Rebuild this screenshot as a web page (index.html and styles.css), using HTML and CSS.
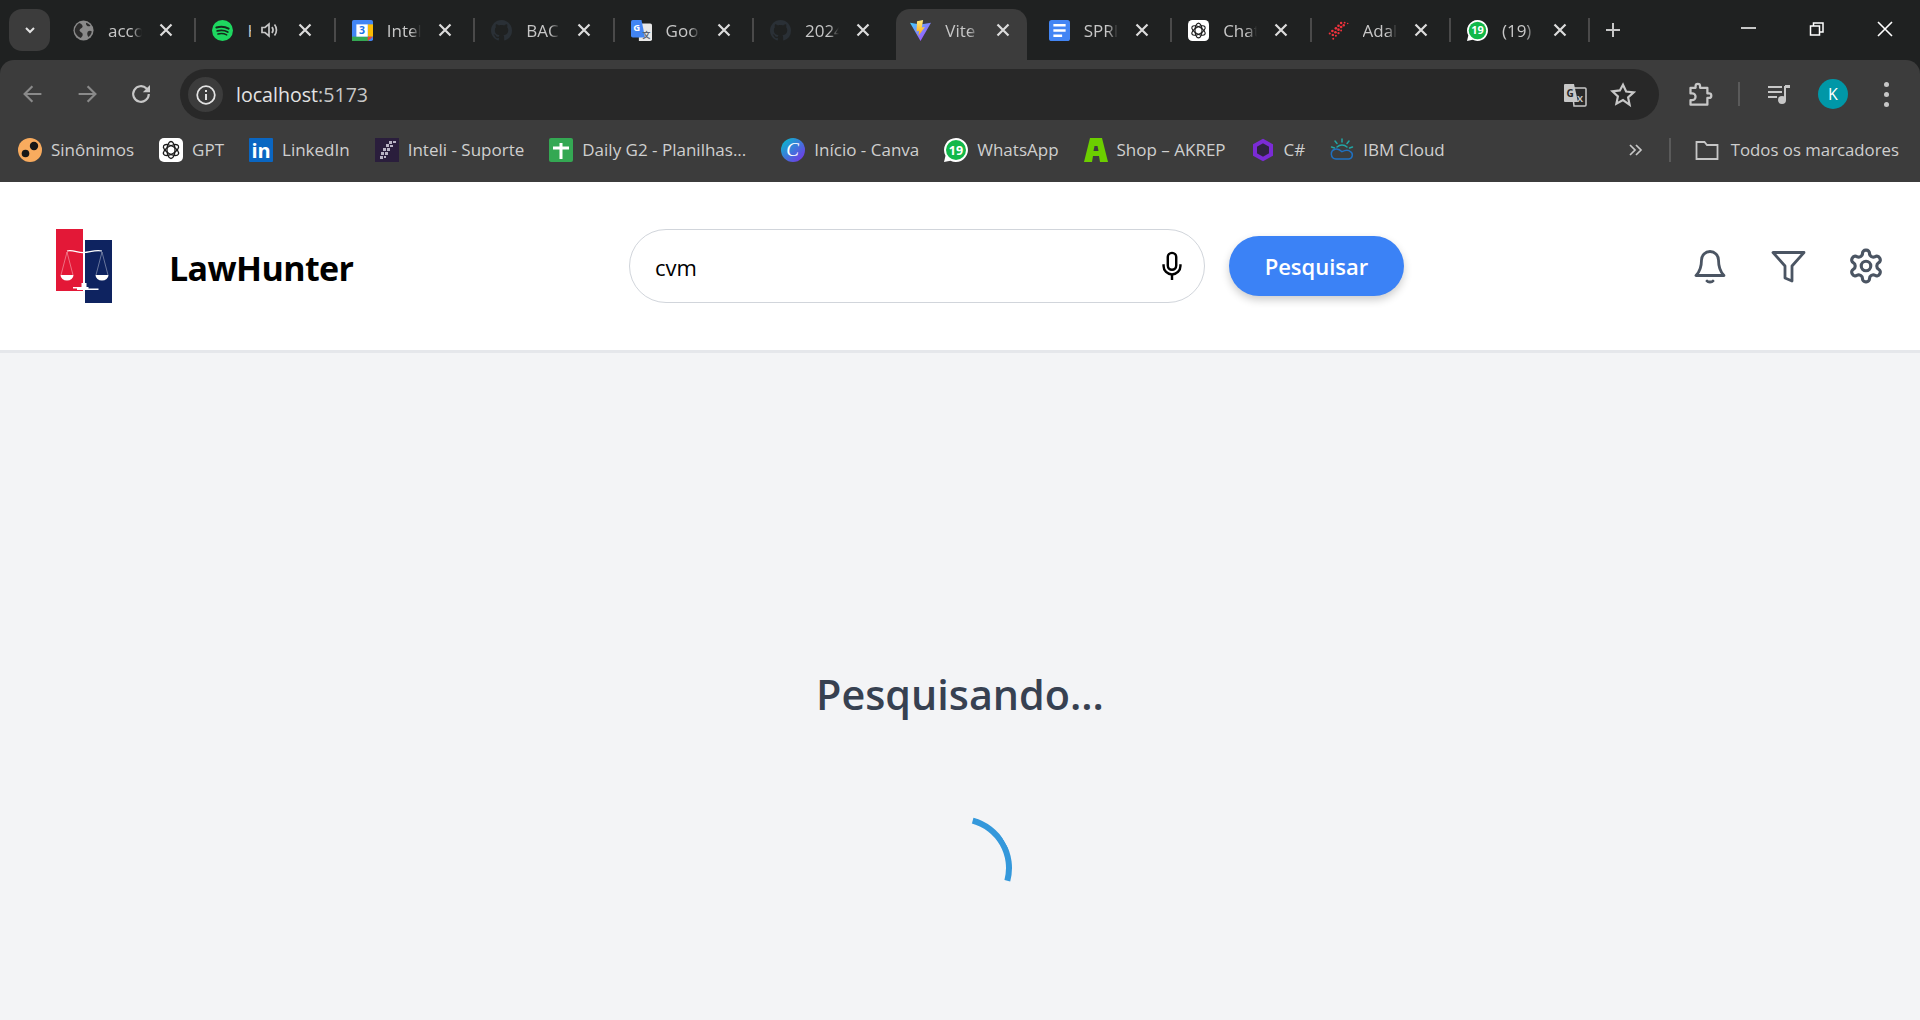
FILE: index.html
```html
<!DOCTYPE html>
<html lang="pt-BR">
<head>
  <meta charset="UTF-8">
  <meta name="viewport" content="width=device-width, initial-scale=1.0">
  <title>Vite + React</title>
  <link rel="stylesheet" href="styles.css">
</head>
<body>
  <svg class="sprites" aria-hidden="true">
    <defs>
      <linearGradient id="viteBg" x1="0" y1="0" x2="1" y2="1"><stop offset="0" stop-color="#41d1ff"/><stop offset="1" stop-color="#bd34fe"/></linearGradient>
      <linearGradient id="viteBolt" x1="0" y1="0" x2="0" y2="1"><stop offset="0" stop-color="#ffea83"/><stop offset="1" stop-color="#ffa800"/></linearGradient>
      <linearGradient id="canvaBg" x1="0" y1="0" x2="1" y2="1"><stop offset="0" stop-color="#00c4cc"/><stop offset="1" stop-color="#7d2ae8"/></linearGradient>
      <symbol id="i-x" viewBox="0 0 14 14"><path d="M1.500 1.500l11 11M12.500 1.500l-11 11" stroke="#dcdcdc" stroke-width="2.200"/></symbol>
      <symbol id="i-globe" viewBox="0 0 24 24"><circle cx="12" cy="12" r="11.500" fill="#8a8a8a"/><path d="M7 3.500c2 .5 4 2 4 4s-3 2-3.500 4 3 2.500 3.500 4.500-1 3-2 4.500c-3-1-6.500-4-7-8.500C2 9 4 5.500 7 3.500zM15 3c2 .5 4 2 5 3.500-1.500 1-3 1-4 0s-1.500-2.500-1-3.500zM17 13c1.500-.8 3-.8 4.500 0-.5 3-2 5-4 6.500-1-2-2-4.500-.5-6.500z" fill="#2c2c2c"/></symbol>
      <symbol id="i-spotify" viewBox="0 0 24 24"><circle cx="12" cy="12" r="12" fill="#1ed760"/><g fill="none" stroke="#14291c" stroke-linecap="round"><path d="M5 8.500c4.500-1.300 10-1 14 1.300" stroke-width="2.300"/><path d="M6 12.500c4-1 8.500-.7 12 1.200" stroke-width="2"/><path d="M6.800 16c3.500-.8 7-.5 10 1" stroke-width="1.700"/></g></symbol>
      <symbol id="i-calendar" viewBox="0 0 24 24"><rect width="24" height="24" rx="2" fill="#4285f4"/><rect x="18" y="5" width="6" height="14" fill="#fbbc04"/><rect y="19" width="19" height="5" fill="#34a853"/><path d="M18 19h6l-6 5z" fill="#ea4335"/><rect x="5" y="5" width="13" height="14" fill="#fff"/><text x="11.500" y="16.500" text-anchor="middle" class="svg-bold" font-size="12" fill="#1a73e8">3</text></symbol>
      <symbol id="i-github" viewBox="0 0 16 16"><path fill="#2a3036" d="M8 0C3.580 0 0 3.580 0 8c0 3.540 2.290 6.530 5.470 7.590.4.070.55-.17.55-.38 0-.19-.01-.82-.01-1.490-2.010.37-2.530-.49-2.690-.94-.09-.23-.48-.94-.82-1.130-.28-.15-.68-.52-.01-.53.63-.01 1.080.58 1.230.82.72 1.210 1.870.87 2.330.66.070-.52.280-.87.510-1.070-1.780-.2-3.640-.89-3.640-3.950 0-.87.310-1.590.820-2.150-.08-.2-.36-1.020.08-2.120 0 0 .67-.21 2.200.82.64-.18 1.320-.27 2-.27s1.360.09 2 .27c1.530-1.040 2.200-.82 2.200-.82.44 1.100.16 1.920.08 2.120.51.560.82 1.270.82 2.150 0 3.070-1.870 3.750-3.650 3.950.29.25.54.73.54 1.480 0 1.070-.01 1.930-.01 2.200 0 .21.150.46.550.38A8.010 8.010 0 0 0 16 8c0-4.420-3.580-8-8-8z"/></symbol>
      <symbol id="i-gtranslate" viewBox="0 0 24 24"><path d="M9 4h13a2 2 0 0 1 2 2v16a2 2 0 0 1-2 2H9z" fill="#e8e8e8"/><path d="M2 0h10l4 20H2a2 2 0 0 1-2-2V2a2 2 0 0 1 2-2z" fill="#4285f4"/><text x="6.500" y="13" text-anchor="middle" class="svg-bold" font-size="11" fill="#fff">G</text><text x="17.500" y="20" text-anchor="middle" class="svg-bold" font-size="9" fill="#5a6270">文</text></symbol>
      <symbol id="i-vite" viewBox="0 0 24 24"><path d="M0 3l12 2.200L24 3 12 24z" fill="url(#viteBg)"/><path d="M15 0L8 1.500 7.500 13l3-.6-.8 5.600L17 8l-3.500.6z" fill="url(#viteBolt)"/></symbol>
      <symbol id="i-docs" viewBox="0 0 24 24"><rect width="24" height="24" rx="3" fill="#4285f4"/><path d="M5 6h14M5 12h14M5 18h10" stroke="#fff" stroke-width="2.600"/></symbol>
      <symbol id="i-chatgpt" viewBox="0 0 24 24"><rect width="24" height="24" rx="5" fill="#fff"/><g fill="none" stroke="#1a1a1a" stroke-width="1.300"><ellipse cx="12" cy="12" rx="4" ry="8.500"/><ellipse cx="12" cy="12" rx="4" ry="8.500" transform="rotate(60 12 12)"/><ellipse cx="12" cy="12" rx="4" ry="8.500" transform="rotate(120 12 12)"/></g></symbol>
      <symbol id="i-ada" viewBox="0 0 24 24"><g fill="#f0323c"><circle cx="19" cy="3" r="1.100"/><circle cx="22.500" cy="4" r=".9"/><circle cx="15" cy="3.500" r="1.400"/><circle cx="18" cy="6" r="1.400"/><circle cx="12" cy="6.500" r="1.500"/><circle cx="15" cy="8" r="1.500"/><circle cx="9" cy="9.500" r="1.500"/><circle cx="12" cy="11" r="1.500"/><circle cx="15" cy="12" r="1.100"/><circle cx="5" cy="12.500" r="1.500"/><circle cx="8.500" cy="14" r="1.500"/><circle cx="12" cy="15" r="1.300"/><circle cx="2" cy="15.500" r="1.200"/><circle cx="5.500" cy="17" r="1.400"/><circle cx="9" cy="18" r="1.200"/><circle cx="6" cy="21.500" r="1.100"/></g></symbol>
      <symbol id="i-whatsapp" viewBox="0 0 24 24"><path d="M12 0a12 12 0 1 1-5.500 22.700L0 24l1.500-6.200A12 12 0 0 1 12 0z" fill="#fff"/><circle cx="12" cy="12" r="10" fill="#12b84a"/><text x="12" y="16.500" text-anchor="middle" class="svg-bold" font-size="12.500" fill="#fff">19</text></symbol>
      <symbol id="i-sinonimos" viewBox="0 0 24 24"><circle cx="12" cy="12" r="12" fill="#f8ab5e"/><circle cx="16" cy="8" r="4.200" fill="#171717"/><circle cx="7.500" cy="15.500" r="3.800" fill="#171717"/></symbol>
      <symbol id="i-linkedin" viewBox="0 0 24 24"><rect width="24" height="24" rx="1" fill="#0a66c2"/><text x="12" y="20" text-anchor="middle" class="svg-bold" font-size="20" fill="#fff">in</text></symbol>
      <symbol id="i-inteli" viewBox="0 0 24 24"><rect width="24" height="24" fill="#2a1e3c"/><g fill="#b9b4c4"><rect x="14" y="3" width="3" height="3"/><rect x="18" y="3" width="3" height="2"/><rect x="11" y="6" width="3" height="3"/><rect x="15" y="7" width="3" height="2"/><rect x="8" y="10" width="3" height="3"/><rect x="12" y="10" width="3" height="3"/><rect x="6" y="14" width="3" height="3"/><rect x="10" y="14" width="3" height="3"/><rect x="5" y="18" width="3" height="3"/><rect x="9" y="18" width="2" height="2"/></g></symbol>
      <symbol id="i-sheet" viewBox="0 0 24 24"><rect width="24" height="24" rx="2" fill="#34a853"/><path d="M12 5v16M4 10h16" stroke="#fff" stroke-width="3"/></symbol>
      <symbol id="i-canva" viewBox="0 0 24 24"><circle cx="12" cy="12" r="12" fill="url(#canvaBg)"/><text x="11.500" y="18" text-anchor="middle" class="svg-serif" font-size="19" fill="#fff">C</text></symbol>
      <symbol id="i-akrep" viewBox="0 0 24 24"><path d="M6 0h12l6 24h-8l-1-6H9l-1 6H0z" fill="#6cce00"/><path d="M10.500 8h3l1 5h-5z" fill="#3c3c3c"/></symbol>
      <symbol id="i-csharp" viewBox="0 0 24 24"><path d="M12 3l8 4.500v9L12 21l-8-4.500v-9z" fill="#2f2440" stroke="#7b2bd6" stroke-width="4"/></symbol>
      <symbol id="i-ibm" viewBox="0 0 24 24"><g fill="none" stroke-linecap="round" stroke-width="1.500"><path d="M12 1v3M5 3l2 2.500M19 3l-2 2.500M1.500 9l3 1M22.500 9l-3 1" stroke="#22a6a6"/><path d="M7 9a7 7 0 0 1 10 0" stroke="#22a6a6"/><path d="M6 21a5 5 0 0 1-1-9.800c3-1 5 .5 7 2.500 2-1 6-2.500 8.500 0a4 4 0 0 1-1.500 7.300z" stroke="#1f70c1"/></g></symbol>
    </defs>
  </svg>

  <header class="chrome">
    <div class="tabstrip">
      <button class="tab-search"><svg width="14" height="14" viewBox="0 0 14 14"><path d="M3 5l4 4 4-4" fill="none" stroke="#e3e3e3" stroke-width="2"/></svg></button>
      <div class="tabs">
        <div class="tab"><svg class="favicon"><use href="#i-globe"/></svg><span class="tab-title">accounts</span><svg class="tab-x"><use href="#i-x"/></svg></div>
        <div class="tab tab-audio"><svg class="favicon"><use href="#i-spotify"/></svg><span class="tab-title">Home</span>
          <svg class="tab-speaker" viewBox="0 0 20 20"><path d="M3 7.500h3L10 4v12l-4-3.500H3z" fill="none" stroke="#c7c7c7" stroke-width="1.700"/><path d="M13 7c1.300 1.800 1.300 4.200 0 6M15.500 4.500c2.600 3.200 2.600 7.800 0 11" fill="none" stroke="#c7c7c7" stroke-width="1.700"/></svg>
          <svg class="tab-x"><use href="#i-x"/></svg></div>
        <div class="tab"><svg class="favicon"><use href="#i-calendar"/></svg><span class="tab-title">Inteli</span><svg class="tab-x"><use href="#i-x"/></svg></div>
        <div class="tab"><svg class="favicon"><use href="#i-github"/></svg><span class="tab-title">BACEN</span><svg class="tab-x"><use href="#i-x"/></svg></div>
        <div class="tab"><svg class="favicon"><use href="#i-gtranslate"/></svg><span class="tab-title">Google</span><svg class="tab-x"><use href="#i-x"/></svg></div>
        <div class="tab"><svg class="favicon"><use href="#i-github"/></svg><span class="tab-title">2024</span><svg class="tab-x"><use href="#i-x"/></svg></div>
        <div class="tab tab-active"><svg class="favicon"><use href="#i-vite"/></svg><span class="tab-title">Vite + React</span><svg class="tab-x"><use href="#i-x"/></svg></div>
        <div class="tab"><svg class="favicon"><use href="#i-docs"/></svg><span class="tab-title">SPRINT</span><svg class="tab-x"><use href="#i-x"/></svg></div>
        <div class="tab"><svg class="favicon"><use href="#i-chatgpt"/></svg><span class="tab-title">ChatGPT</span><svg class="tab-x"><use href="#i-x"/></svg></div>
        <div class="tab"><svg class="favicon"><use href="#i-ada"/></svg><span class="tab-title">Adalove</span><svg class="tab-x"><use href="#i-x"/></svg></div>
        <div class="tab"><svg class="favicon"><use href="#i-whatsapp"/></svg><span class="tab-title">(19) What</span><svg class="tab-x"><use href="#i-x"/></svg></div>
      </div>
      <svg class="newtab" viewBox="0 0 16 16"><path d="M8 1v14M1 8h14" stroke="#c7c7c7" stroke-width="2"/></svg>
      <div class="winctl">
        <svg viewBox="0 0 16 16"><path d="M0 7h15" stroke="#fff" stroke-width="1.500"/></svg>
        <svg viewBox="0 0 16 16"><path d="M1.500 5h9v9h-9zM4.500 5V2h9.500v9h-3.500" fill="none" stroke="#fff" stroke-width="1.500"/></svg>
        <svg viewBox="0 0 16 16"><path d="M1 1l14 14M15 1L1 15" stroke="#fff" stroke-width="1.600"/></svg>
      </div>
    </div>

    <div class="toolbar">
      <svg class="nav nav-off" viewBox="0 0 20 20"><path d="M17 10H3M9.500 3.500L3 10l6.500 6.500" fill="none" stroke="#8a8a8a" stroke-width="1.800"/></svg>
      <svg class="nav nav-off" viewBox="0 0 20 20"><path d="M3 10h14M10.500 3.500L17 10l-6.500 6.500" fill="none" stroke="#8a8a8a" stroke-width="1.800"/></svg>
      <svg class="nav" viewBox="0 0 20 20"><path d="M16.500 10a6.500 6.500 0 1 1-1.900-4.600L16.500 7.500" fill="none" stroke="#c7c7c7" stroke-width="1.800"/><path d="M17.500 2.500v6h-6z" fill="#c7c7c7"/></svg>
      <div class="omnibox">
        <span class="site-info"><svg viewBox="0 0 20 20"><circle cx="10" cy="10" r="8" fill="none" stroke="#e3e3e3" stroke-width="1.600"/><path d="M10 9v5.500M10 5.500v1.800" stroke="#e3e3e3" stroke-width="1.800"/></svg></span>
        <span class="url">localhost<span class="url-port">:5173</span></span>
        <svg class="omni-icon omni-translate" viewBox="0 0 26 26">
          <path d="M10 6h13a1 1 0 0 1 1 1v16a1 1 0 0 1-1 1H12z" fill="none" stroke="#c7c7c7" stroke-width="1.500"/>
          <path d="M3 2h9l4 18H3a1 1 0 0 1-1-1V3a1 1 0 0 1 1-1z" fill="#c7c7c7"/>
          <text x="8" y="15" text-anchor="middle" class="svg-bold" font-size="10" fill="#282828">G</text>
          <text x="18" y="20" text-anchor="middle" class="svg-bold" font-size="9" fill="#c7c7c7">X</text>
        </svg>
        <svg class="omni-icon" viewBox="0 0 24 24"><path d="M12 2.500l2.900 6.300 6.900.8-5.100 4.700 1.400 6.800L12 16.700l-6.100 3.400 1.400-6.800-5.100-4.700 6.900-.8z" fill="none" stroke="#c7c7c7" stroke-width="2"/></svg>
      </div>
      <div class="tool-right">
        <svg class="tool-ext" viewBox="0 0 24 24"><path d="M4 6h4.500V4.500a2 2 0 0 1 4 0V6H19v5h1.500a2 2 0 0 1 0 4H19v6H4v-4h1.500a3 3 0 0 0 0-6H4z" fill="none" stroke="#c7c7c7" stroke-width="2" stroke-linejoin="round"/></svg>
        <span class="tool-sep"></span>
        <svg class="tool-media" viewBox="0 0 24 24"><path d="M1 5h14M1 10h14M1 15h9" stroke="#c7c7c7" stroke-width="2"/><path d="M18 4v14" stroke="#c7c7c7" stroke-width="2"/><path d="M18 3h5v3h-5z" fill="#c7c7c7"/><circle cx="15" cy="18" r="4" fill="#c7c7c7"/></svg>
        <span class="avatar">K</span>
        <span class="dots"><i></i><i></i><i></i></span>
      </div>
    </div>

    <nav class="bookmarks">
      <a class="bm"><svg><use href="#i-sinonimos"/></svg>Sinônimos</a>
      <a class="bm"><svg><use href="#i-chatgpt"/></svg>GPT</a>
      <a class="bm"><svg><use href="#i-linkedin"/></svg>LinkedIn</a>
      <a class="bm"><svg><use href="#i-inteli"/></svg>Inteli - Suporte</a>
      <a class="bm bm-long"><svg><use href="#i-sheet"/></svg>Daily G2 - Planilhas...</a>
      <a class="bm"><svg><use href="#i-canva"/></svg>Início - Canva</a>
      <a class="bm"><svg><use href="#i-whatsapp"/></svg>WhatsApp</a>
      <a class="bm"><svg><use href="#i-akrep"/></svg>Shop – AKREP</a>
      <a class="bm"><svg><use href="#i-csharp"/></svg>C#</a>
      <a class="bm"><svg><use href="#i-ibm"/></svg>IBM Cloud</a>
      <svg class="bm-more" viewBox="0 0 16 16"><path d="M3 3l5 5-5 5M9 3l5 5-5 5" fill="none" stroke="#c7c7c7" stroke-width="1.700"/></svg>
      <span class="bm-sep"></span>
      <a class="bm bm-all"><svg viewBox="0 0 24 24"><path d="M1.500 4h8l2.500 3h10.500v14h-21z" fill="none" stroke="#c7c7c7" stroke-width="1.800"/></svg>Todos os marcadores</a>
    </nav>
  </header>

  <header class="app-header">
    <div class="brand">
      <svg class="logo" viewBox="0 0 58 74">
        <rect x="1" y="0" width="27" height="62" fill="#e31837"/>
        <rect x="30" y="11" width="27" height="63" fill="#0e2360"/>
        <g fill="none" stroke="#fff">
          <path d="M12 22c6-1.500 11 2 17 1.500s12-3 18-1.500" stroke-width="1.200"/>
          <path d="M29 20v36" stroke-width="2"/>
          <path d="M12 23L6 46M12 23l6 23M47 23l-6 23M47 23l6 23" stroke-width=".5" opacity=".75"/>
        </g>
        <path d="M5.500 46h13a6.500 5.500 0 0 1-13 0zM40.500 46h13a6.500 5.500 0 0 1-13 0zM26.500 54h5v4h2v1.500h10V61H22v-1.500h-4V58h8.500z" fill="#fff"/>
      </svg>
      <span class="brand-name">LawHunter</span>
    </div>
    <div class="search">
      <div class="search-box">
        <span class="search-text">cvm</span>
        <svg class="mic" viewBox="0 0 24 32"><rect x="7.500" y="2" width="9" height="18" rx="4.500" fill="none" stroke="#000" stroke-width="2.600"/><path d="M3 14v2a9 9 0 0 0 18 0v-2M12 25v6" fill="none" stroke="#000" stroke-width="2.600"/></svg>
      </div>
      <button class="search-btn">Pesquisar</button>
    </div>
    <div class="header-icons">
      <svg viewBox="0 0 38 38"><path d="M19 4.500a8.500 8.500 0 0 0-8.500 8.500c0 9-3 13-5.500 15.500h28c-2.500-2.500-5.500-6.500-5.500-15.500A8.500 8.500 0 0 0 19 4.500zM16 34c1 1.300 5 1.300 6 0"/></svg>
      <svg viewBox="0 0 38 38"><path d="M4 5.500h31L23 19v15l-7-3V19z"/></svg>
      <svg viewBox="0 0 24 24" class="icon-gear"><path d="M12.220 2h-.44a2 2 0 0 0-2 2v.18a2 2 0 0 1-1 1.730l-.43.250a2 2 0 0 1-2 0l-.15-.08a2 2 0 0 0-2.730.730l-.22.380a2 2 0 0 0 .730 2.730l.15.100a2 2 0 0 1 1 1.720v.510a2 2 0 0 1-1 1.740l-.15.090a2 2 0 0 0-.730 2.730l.22.380a2 2 0 0 0 2.730.730l.15-.08a2 2 0 0 1 2 0l.43.250a2 2 0 0 1 1 1.730V20a2 2 0 0 0 2 2h.44a2 2 0 0 0 2-2v-.18a2 2 0 0 1 1-1.730l.43-.25a2 2 0 0 1 2 0l.15.08a2 2 0 0 0 2.730-.730l.22-.39a2 2 0 0 0-.730-2.730l-.15-.08a2 2 0 0 1-1-1.740v-.5a2 2 0 0 1 1-1.740l.15-.09a2 2 0 0 0 .730-2.730l-.22-.38a2 2 0 0 0-2.730-.730l-.15.08a2 2 0 0 1-2 0l-.43-.25a2 2 0 0 1-1-1.730V4a2 2 0 0 0-2-2z"/><circle cx="12" cy="12" r="3"/></svg>
    </div>
  </header>

  <main class="loading">
    <h2 class="loading-text">Pesquisando...</h2>
    <div class="spinner"></div>
  </main>
</body>
</html>
```

FILE: styles.css
```css
* {
  box-sizing: border-box;
}
html, body {
  height: 100%;
}
body {
  margin: 0;
  background: #f3f4f6;
  font-family: "Open Sans", "Liberation Sans", sans-serif;
  overflow: hidden;
}
.sprites {
  width: 0;
  height: 0;
  display: block;
}
.svg-bold {
  font-family: "Open Sans", "Noto Sans CJK SC", sans-serif;
  font-weight: 700;
}
.svg-serif {
  font-family: "Liberation Serif", serif;
  font-style: italic;
}

/* browser chrome */
.chrome {
  background: #1f2121;
}
.tabstrip {
  height: 60px;
  display: flex;
  align-items: flex-start;
}
.tab-search {
  width: 41px;
  height: 42px;
  margin: 9px 7px 0 9px;
  border: none;
  border-radius: 13px;
  background: #3c3c3c;
  display: flex;
  align-items: center;
  justify-content: center;
  padding: 0;
}
.tabs {
  display: flex;
}
.tab {
  width: 139.400px;
  height: 51px;
  margin-top: 9px;
  padding-left: 16px;
  display: flex;
  align-items: center;
  color: #c7c7c7;
  font-size: 17px;
  background: linear-gradient(#4a4a4a, #4a4a4a) right 9px / 2px 24px no-repeat;
}
.favicon {
  width: 21px;
  height: 21px;
  margin-top: -9px;
  flex: none;
}
.tab-title {
  width: 34px;
  margin: -9px 0 0 14px;
  overflow: hidden;
  white-space: nowrap;
  flex: none;
  -webkit-mask-image: linear-gradient(to right, #000 70%, transparent);
  mask-image: linear-gradient(to right, #000 70%, transparent);
}
.tab-x {
  width: 14px;
  height: 14px;
  margin: -9px 0 0 17px;
  flex: none;
}
.tab-audio .tab-title {
  width: 4px;
  -webkit-mask-image: none;
  mask-image: none;
}
.tab-speaker {
  width: 20px;
  height: 20px;
  margin: -9px 0 0 8px;
  flex: none;
}
.tab-audio .tab-x {
  margin-left: 19px;
}
.tab-active {
  background: #3c3c3c;
  width: 131px;
  margin-left: 3px;
  margin-right: 5.400px;
  padding-left: 14px;
  border-radius: 14px 14px 0 0;
}
.tab:nth-child(6) {
  background: none;
}
.newtab {
  width: 16px;
  height: 16px;
  margin: 22px 0 0 15px;
  flex: none;
}
.winctl {
  margin-left: auto;
  display: flex;
  gap: 52px;
  padding: 21px 27px 0 0;
}
.winctl svg {
  width: 16px;
  height: 16px;
}
.toolbar {
  height: 60px;
  background: #3c3c3c;
  border-radius: 14px 14px 0 0;
  display: flex;
  align-items: center;
  padding: 8px 0 0 21px;
}
.nav {
  width: 24px;
  height: 24px;
  margin-right: 30px;
  flex: none;
}
.omnibox {
  width: 1479px;
  height: 51px;
  margin: 1px 0 0 -3px;
  background: #282828;
  border-radius: 26px;
  display: flex;
  align-items: center;
  padding: 0 8px;
  align-self: flex-start;
}
.site-info {
  width: 35px;
  height: 35px;
  border-radius: 50%;
  background: #3c3c3c;
  display: flex;
  align-items: center;
  justify-content: center;
  flex: none;
}
.site-info svg {
  width: 22px;
  height: 22px;
}
.url {
  margin-left: 13px;
  color: #e3e3e3;
  font-size: 19.600px;
  flex: 1;
}
.url-port {
  color: #c7c7c7;
}
.omni-icon {
  width: 26px;
  height: 26px;
  margin-right: 15px;
  flex: none;
}
.omni-translate {
  margin-right: 22px;
}
.tool-right {
  display: flex;
  align-items: center;
  padding-left: 27px;
}
.tool-ext {
  width: 27px;
  height: 27px;
}
.tool-sep {
  width: 2px;
  height: 24px;
  margin: 0 27px 0 25px;
  background: #5a5a5a;
}
.tool-media {
  width: 24px;
  height: 24px;
}
.avatar {
  width: 30px;
  height: 30px;
  margin-left: 27px;
  border-radius: 50%;
  background: #0097a7;
  color: #fff;
  font-size: 16px;
  display: flex;
  align-items: center;
  justify-content: center;
}
.dots {
  display: flex;
  flex-direction: column;
  gap: 5px;
  margin-left: 36px;
}
.dots i {
  width: 5px;
  height: 5px;
  border-radius: 50%;
  background: #c7c7c7;
}
.bookmarks {
  height: 62px;
  background: #3c3c3c;
  display: flex;
  align-items: center;
  padding: 0 21px 3px 18px;
  color: #cfcfcf;
  font-size: 17px;
}
.bm {
  display: flex;
  align-items: center;
  gap: 9px;
  margin-right: 25px;
  white-space: nowrap;
}
.bm svg {
  width: 24px;
  height: 24px;
  flex: none;
}
.bm-long {
  margin-right: 35px;
}
.bm-more {
  width: 16px;
  height: 16px;
  margin-left: auto;
  flex: none;
}
.bm-sep {
  width: 2px;
  height: 24px;
  margin: 0 24px 0 26px;
  background: #5a5a5a;
}
.bm-all {
  margin-right: 0;
  gap: 12px;
  font-size: 16.800px;
}

/* app */
.app-header {
  height: 171px;
  background: #fff;
  border-bottom: 3px solid #e5e7eb;
  display: flex;
  align-items: flex-start;
  padding: 47px 0 0 55px;
}
.brand {
  width: 574px;
  display: flex;
  align-items: center;
}
.logo {
  width: 58px;
  height: 74px;
  flex: none;
}
.brand-name {
  margin: 4px 0 0 56px;
  font-size: 34px;
  font-weight: 700;
  letter-spacing: -0.600px;
  color: #000;
}
.search {
  display: flex;
  align-items: center;
  gap: 24px;
}
.search-box {
  width: 576px;
  height: 74px;
  border: 1px solid #d1d5db;
  border-radius: 37px;
  display: flex;
  align-items: center;
  justify-content: space-between;
  padding: 0 20px 0 25px;
}
.search-text {
  padding-top: 2px;
  font-size: 22px;
  color: #000;
}
.mic {
  width: 24px;
  height: 30px;
}
.search-btn {
  width: 175px;
  height: 60px;
  border: none;
  border-radius: 30px;
  background: #3b82f6;
  color: #fff;
  font: 600 22px "Open Sans", sans-serif;
  box-shadow: 0 4px 8px rgba(0, 0, 0, 0.2);
}
.header-icons {
  margin-left: auto;
  padding: 0 35px 0 0;
  height: 74px;
  display: flex;
  align-items: center;
  gap: 40px;
}
.header-icons svg {
  width: 38px;
  height: 38px;
  fill: none;
  stroke: #4b5563;
  stroke-width: 2.800;
  stroke-linejoin: round;
  stroke-linecap: round;
}
.header-icons .icon-gear {
  stroke-width: 2;
}
.loading {
  display: flex;
  flex-direction: column;
  align-items: center;
  padding-top: 311px;
}
.loading-text {
  margin: 0;
  font-size: 41.300px;
  font-weight: 600;
  line-height: 60px;
  color: #374151;
}
.spinner {
  width: 104px;
  height: 104px;
  margin-top: 92px;
  border: 6px solid transparent;
  border-top-color: #3498db;
  border-radius: 50%;
  transform: rotate(60deg);
}
```
